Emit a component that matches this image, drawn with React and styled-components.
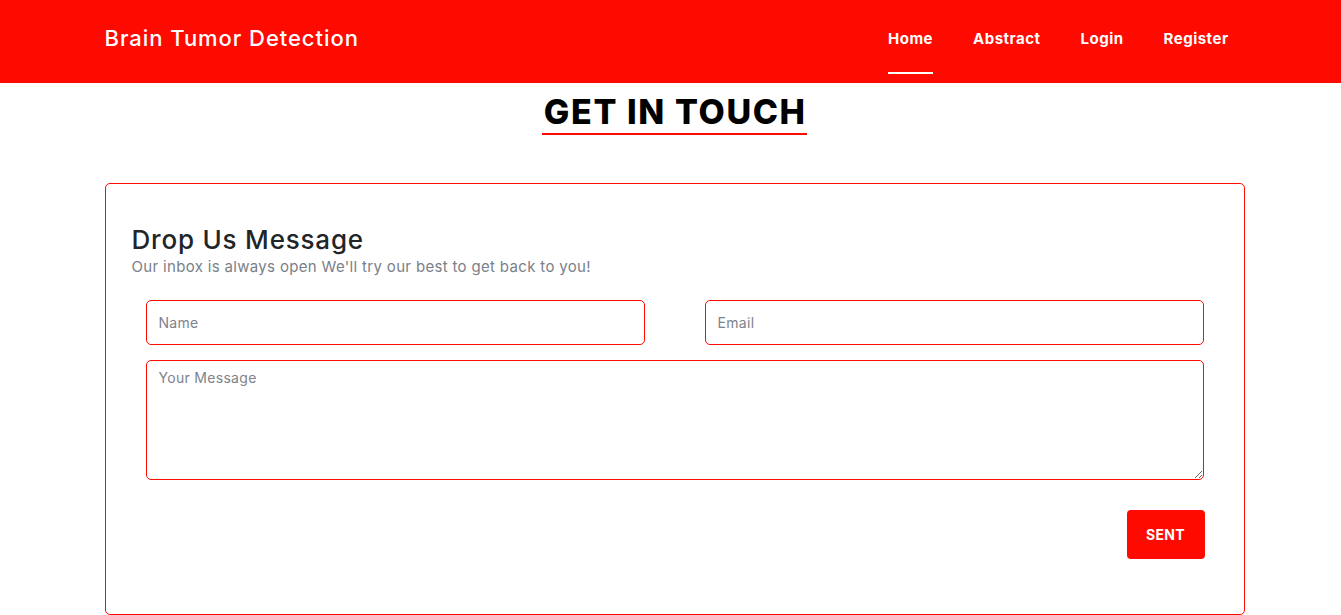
import React from 'react'
import styled, { createGlobalStyle } from 'styled-components';

const RED = '#ff0a00';

const Global = createGlobalStyle`
  body {
    margin: 0;
    background: #fff;
    font-family: "Inter", "Liberation Sans", sans-serif;
  }
  * { box-sizing: border-box; }
`

function App() {
    return (
        <>
            <Global />
            <Header>
                <HeaderInner>
                    <Brand>Brain Tumor Detection</Brand>
                    <Nav>
                        <NavLink active>Home</NavLink>
                        <NavLink>Abstract</NavLink>
                        <NavLink>Login</NavLink>
                        <NavLink>Register</NavLink>
                    </Nav>
                </HeaderInner>
            </Header>
            <Main>
                <Title>GET IN TOUCH</Title>
                <Card>
                    <CardHeading>Drop Us Message</CardHeading>
                    <CardText>Our inbox is always open We'll try our best to get back to you!</CardText>
                    <Form>
                        <Row>
                            <Field placeholder="Name" />
                            <Field placeholder="Email" />
                        </Row>
                        <Message placeholder="Your Message" />
                        <Actions>
                            <SendButton type="button">SENT</SendButton>
                        </Actions>
                    </Form>
                </Card>
            </Main>
        </>
    )
}

const Header = styled.header`
    background: ${RED};
    height: 83px;
`

const HeaderInner = styled.div`
    width: 1140px;
    margin-left: calc(50% - 566px);
    height: 100%;
    display: flex;
    align-items: center;
    justify-content: space-between;
    padding-bottom: 7px;
`

const Brand = styled.div`
    color: #fff;
    font-size: 22px;
    font-weight: 500;
    letter-spacing: 0.95px;
`

const Nav = styled.nav`
    display: flex;
    gap: 40px;
    height: 100%;
    margin-right: 16px;
`

const NavLink = styled.a`
    color: #fff;
    font-size: 15px;
    font-weight: 700;
    letter-spacing: 0.5px;
    display: flex;
    align-items: center;
    height: 100%;
    position: relative;
    cursor: pointer;

    &::after {
        content: '';
        display: ${p => (p.active ? 'block' : 'none')};
        position: absolute;
        left: 0;
        right: 0;
        bottom: 2px;
        height: 2px;
        background: #fff;
    }
`

const Main = styled.main`
    width: 1140px;
    margin-left: calc(50% - 566px);
    display: flex;
    flex-direction: column;
    align-items: center;
`

const Title = styled.h1`
    margin: 9px 0 0;
    font-size: 34px;
    font-weight: 800;
    color: #000;
    line-height: 40px;
    padding: 0 0 1px 1.5px;
    border-bottom: 2px solid ${RED};
    letter-spacing: 1.6px;
`

const Card = styled.section`
    margin-top: 48px;
    width: 100%;
    border: 1px solid ${RED};
    border-radius: 5px;
    padding: 40px 26px 55px;
`

const CardHeading = styled.h2`
    margin: 0;
    font-size: 26px;
    font-weight: 500;
    color: #212529;
    line-height: 32px;
    letter-spacing: 0.8px;
`

const CardText = styled.p`
    margin: 0;
    font-size: 15px;
    color: #7a8088;
    line-height: 22px;
    letter-spacing: 0.33px;
`

const Form = styled.form`
    margin-top: 22px;
    padding: 0 14px;
    display: flex;
    flex-direction: column;
    gap: 15px;
`

const Row = styled.div`
    display: grid;
    grid-template-columns: 1fr 1fr;
    gap: 60px;
`

const Field = styled.input`
    height: 45px;
    border: 1px solid ${RED};
    border-radius: 5px;
    padding: 0 12px;
    font-family: inherit;
    font-size: 14px;
    letter-spacing: 0.3px;
    outline: none;

    &::placeholder { color: #7d838b; }
`

const Message = styled.textarea`
    height: 120px;
    border: 1px solid ${RED};
    border-radius: 5px;
    padding: 8px 12px;
    font-family: inherit;
    font-size: 14px;
    letter-spacing: 0.3px;
    outline: none;
    resize: vertical;

    &::placeholder { color: #7d838b; }
`

const Actions = styled.div`
    display: flex;
    justify-content: flex-end;
    margin-top: 15px;
    margin-right: -1px;
`

const SendButton = styled.button`
    width: 78px;
    height: 49px;
    border: none;
    border-radius: 4px;
    background: ${RED};
    color: #fff;
    font-family: inherit;
    font-size: 14px;
    font-weight: 700;
    letter-spacing: 0.3px;
    cursor: pointer;
`

export default App
